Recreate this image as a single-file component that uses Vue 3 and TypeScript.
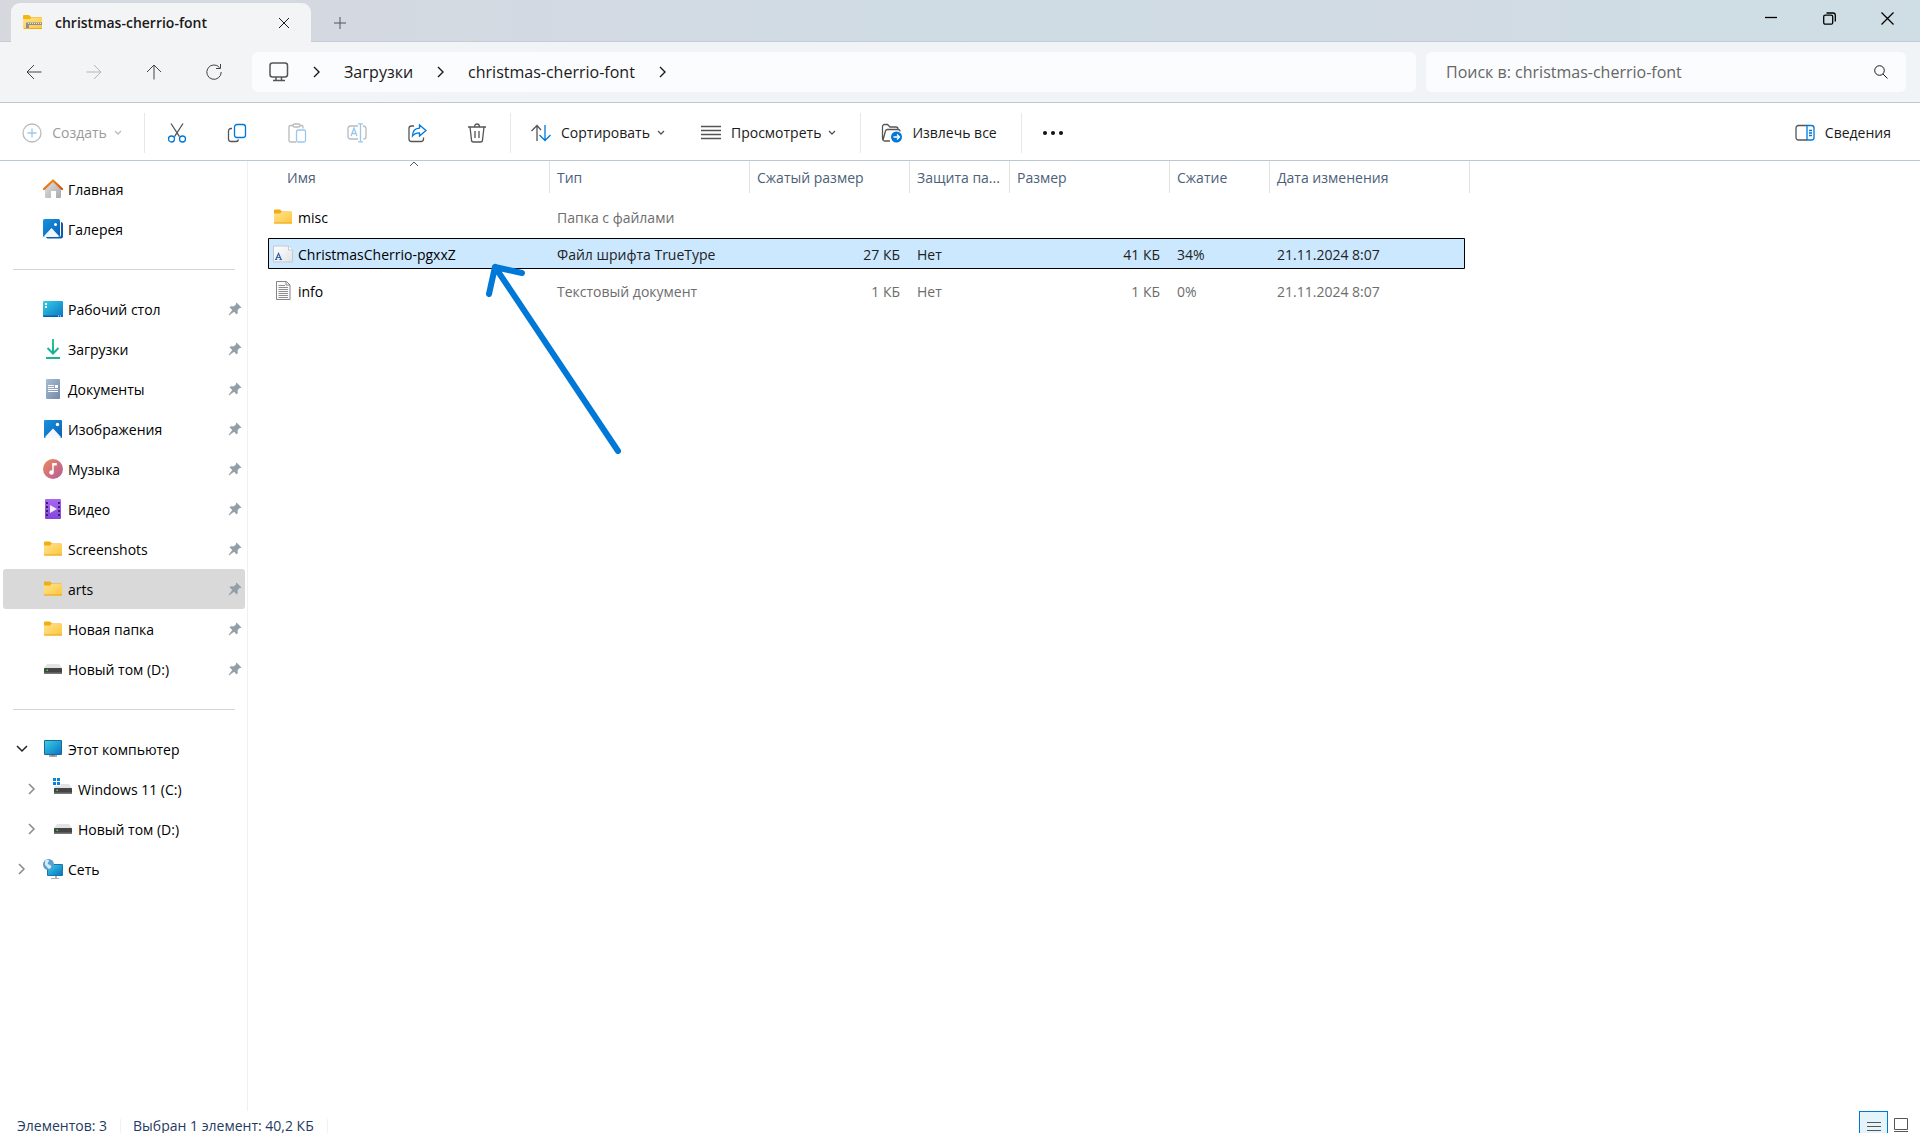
<script setup lang="ts">
import { ref } from 'vue'

interface Place {
  label: string
  icon: string
  pinned?: boolean
  child?: boolean
  twisty?: 'open' | 'closed'
}

interface FileRow {
  name: string
  icon: string
  type: string
  packed: string
  locked: string
  size: string
  ratio: string
  date: string
}

const glyphs: Record<string, string> = {
  home: '<path d="M2 9 10 2l8 7v9a1 1 0 0 1-1 1h-4v-7H8v7H3a1 1 0 0 1-1-1z" fill="url(#g-grey)"/><path d="M1 10 10 1.500l9 8.500" fill="none" stroke="url(#g-roof)" stroke-width="2.200" stroke-linejoin="round" stroke-linecap="round"/>',
  gallery: '<path d="M18 3v13a2 2 0 0 1-2 2H3c.5 1.300 1.200 1.500 2 1.500h13c1.200 0 2-.8 2-2V5c0-1-.8-1.800-2-2z" fill="#0d5cab"/><rect width="17" height="18" rx="1.500" fill="url(#g-blue)"/><path d="m1 17 7.500-8 7.500 8c-.3.600-.6 1-1.500 1h-12C1.600 18 1.200 17.600 1 17z" fill="#eef6ff"/><circle cx="12.500" cy="5.500" r="1.500" fill="#fff"/>',
  desktop: '<rect y="2" width="20" height="16" rx="1" fill="url(#g-cyan)"/><path d="M0 16.500h20v.5a1 1 0 0 1-1 1H1a1 1 0 0 1-1-1z" fill="#0b61a8"/><path d="M2 4h2v2H2zM2 7h2v2H2z" fill="#fff"/><path d="M15 16.500h1v1h-1zM17 16.500h1v1h-1z" fill="#fff"/>',
  downloads: '<path d="M10 0v14.500M4.500 9 10 14.500 15.500 9" fill="none" stroke="url(#g-green)" stroke-width="2"/><path d="M3 19h14" stroke="#17b794" stroke-width="2"/>',
  documents: '<rect x="3" width="14" height="20" rx="1" fill="url(#g-doc)"/><path d="M5 6.500h6M5 8.500h6M5 10.500h10M5 12.500h10" stroke="#fff"/><path d="M12 6h3v3h-3z" fill="#fff"/>',
  pictures: '<rect x="1" y="1" width="18" height="18" rx="1" fill="url(#g-blue)"/><path d="m2 18 8-8.500 8 8.500c-.3.600-.6 1-1.200 1H3.200c-.6 0-1-.4-1.200-1z" fill="#f3f8ff"/><circle cx="14.500" cy="5.500" r="1.700" fill="#fff"/>',
  music: '<circle cx="10" cy="10" r="10" fill="url(#g-music)"/><path d="M10 4.500v8.500" stroke="#fff" stroke-width="1.500"/><path d="M9.300 4h4.500v2.500H9.300z" fill="#fff"/><circle cx="8.500" cy="13.500" r="2.300" fill="#fff"/>',
  video: '<rect x="2" width="16" height="20" rx="1" fill="url(#g-violet)"/><path d="M4 3v15M16 3v15" stroke="#3c1e6e" stroke-width="2" stroke-dasharray="2 2"/><path d="M7 6v8l7-4z" fill="#f4ecff"/>',
  folder: '<path d="M1 3.500a1 1 0 0 1 1-1h5L9 4.500h9a1 1 0 0 1 1 1V8H1z" fill="#f3ac12"/><path d="M1 6.500h6l1.500-1.500H19v10.500a1 1 0 0 1-1 1H2a1 1 0 0 1-1-1z" fill="url(#g-folder)"/><path d="M1 16h18" stroke="#e7a51b"/>',
  drive: '<path d="M4 5h12l3 4H1z" fill="#e3e3e5"/><rect x="1" y="9" width="18" height="6" rx=".5" fill="#444"/><path d="M1 13.500h18V15H1z" fill="#777"/><path d="M3.500 10.500h1.500V12H3.500z" fill="#2dea4a"/>',
  system: '<path d="M4 5h12l3 4H1z" fill="#e3e3e5"/><rect x="1" y="9" width="18" height="6" rx=".5" fill="#444"/><path d="M1 13.500h18V15H1z" fill="#777"/><path d="M3.500 10.500h1.500V12H3.500z" fill="#2dea4a"/><path d="M0-1h7.500v8H0z" fill="#fff"/><path d="M0-1h3v3H0zM4-1h3v3H4zM0 3h3v3H0zM4 3h3v3H4z" fill="#0a84d8"/>',
  computer: '<path d="M8.500 15h3v2h-3z" fill="#9aa1a8"/><path d="M6 17h8" stroke="#6a7178" stroke-width="1.200"/><rect x="1" y="1" width="18" height="15" rx="1" fill="#1d6796"/><rect x="2" y="2" width="16" height="13" fill="url(#g-cyan)"/>',
  network: '<path d="M12 16h2v3h-2zM8 19h8v1H8z" fill="#a8afb6"/><rect x="4" y="5" width="16" height="12" rx="1" fill="#1c74a8"/><rect x="5" y="6" width="14" height="10" fill="url(#g-cyan)"/><circle cx="5.500" cy="5.500" r="5.500" fill="#5b9fd0"/><path d="M2 2c2-2 4-1 4 0s-2 2-1 3 2 0 3 2-2 3-2 3C4 9 4 7 2 6z" fill="#d5eaf7"/>',
  font: '<path d="M.5 2h15L19.500 6v12H.5z" fill="url(#g-page)" stroke="#c3c8cd"/><path d="M15.500 2v4h4" fill="#fff" stroke="#c3c8cd"/><path d="m3 15 2.500-5.500L8 15M4 13.500h3M2 15.500h2.200M6.500 15.500H9" fill="none" stroke="#2e62ae" stroke-width="1.200"/>',
  text: '<path d="M3.500.5h10L17 4v14.500H3.500z" fill="#fafafa" stroke="#858585"/><path d="M13 .5V4h4" fill="none" stroke="#858585"/><path d="M5.500 4.500H12M5.500 6.500H15M5.500 8.500H15M5.500 10.500H15M5.500 12.500H15M5.500 14.500H15M5.500 16.500H15" stroke="#8f8f8f"/>',
  zip: '<path d="M0 3a1 1 0 0 1 1-1h5l2 2h10a1 1 0 0 1 1 1v3H0z" fill="#f5b70f"/><path d="M0 6h7l1.500-1.500H19V15a1 1 0 0 1-1 1H1a1 1 0 0 1-1-1z" fill="url(#g-folder)"/><path d="M4 9.500h15v2.500H6v4H3v-6z" fill="#8b8f94"/><path d="M5 10.500h14" stroke="#e4e6e8" stroke-dasharray="1 1"/><path d="M1 15.500h18" stroke="#eaaa20"/>',
}

const groups: Place[][] = [
  [
    { label: 'Главная', icon: 'home' },
    { label: 'Галерея', icon: 'gallery' },
  ],
  [
    { label: 'Рабочий стол', icon: 'desktop', pinned: true },
    { label: 'Загрузки', icon: 'downloads', pinned: true },
    { label: 'Документы', icon: 'documents', pinned: true },
    { label: 'Изображения', icon: 'pictures', pinned: true },
    { label: 'Музыка', icon: 'music', pinned: true },
    { label: 'Видео', icon: 'video', pinned: true },
    { label: 'Screenshots', icon: 'folder', pinned: true },
    { label: 'arts', icon: 'folder', pinned: true },
    { label: 'Новая папка', icon: 'folder', pinned: true },
    { label: 'Новый том (D:)', icon: 'drive', pinned: true },
  ],
  [
    { label: 'Этот компьютер', icon: 'computer', twisty: 'open' },
    { label: 'Windows 11 (C:)', icon: 'system', twisty: 'closed', child: true },
    { label: 'Новый том (D:)', icon: 'drive', twisty: 'closed', child: true },
    { label: 'Сеть', icon: 'network', twisty: 'closed' },
  ],
]

const columns = ['Имя', 'Тип', 'Сжатый размер', 'Защита па...', 'Размер', 'Сжатие', 'Дата изменения']

const files: FileRow[] = [
  { name: 'misc', icon: 'folder', type: 'Папка с файлами', packed: '', locked: '', size: '', ratio: '', date: '' },
  { name: 'ChristmasCherrio-pgxxZ', icon: 'font', type: 'Файл шрифта TrueType', packed: '27 КБ', locked: 'Нет', size: '41 КБ', ratio: '34%', date: '21.11.2024 8:07' },
  { name: 'info', icon: 'text', type: 'Текстовый документ', packed: '1 КБ', locked: 'Нет', size: '1 КБ', ratio: '0%', date: '21.11.2024 8:07' },
]

const currentPlace = ref('arts')
const selectedFile = ref('ChristmasCherrio-pgxxZ')
const query = ref('')
</script>

<template>
  <div class="explorer">
    <svg class="defs" width="0" height="0" aria-hidden="true">
      <defs>
        <linearGradient id="g-grey" x2="1" y2="1"><stop stop-color="#e2e2e2" /><stop offset="1" stop-color="#a9a9a9" /></linearGradient>
        <linearGradient id="g-roof" x2="1" y2="1"><stop stop-color="#f59a1b" /><stop offset="1" stop-color="#d8480c" /></linearGradient>
        <linearGradient id="g-blue" x2="1" y2="1"><stop stop-color="#1793e0" /><stop offset="1" stop-color="#0a5fb4" /></linearGradient>
        <linearGradient id="g-cyan" x2="1" y2="1"><stop stop-color="#35d0e2" /><stop offset="1" stop-color="#0b73c8" /></linearGradient>
        <linearGradient id="g-green" gradientUnits="userSpaceOnUse" x1="0" y1="0" x2="0" y2="18"><stop stop-color="#2fc98c" /><stop offset="1" stop-color="#12a69a" /></linearGradient>
        <linearGradient id="g-doc" x2="1" y2="1"><stop stop-color="#a9bdd3" /><stop offset="1" stop-color="#7288a6" /></linearGradient>
        <linearGradient id="g-music" x2="1" y2="1"><stop stop-color="#ee8a55" /><stop offset="1" stop-color="#b25aa0" /></linearGradient>
        <linearGradient id="g-violet" x2="0" y2="1"><stop stop-color="#a967f2" /><stop offset="1" stop-color="#8544dc" /></linearGradient>
        <linearGradient id="g-folder" x2="1" y2="1"><stop stop-color="#ffe391" /><stop offset="1" stop-color="#fdc638" /></linearGradient>
        <linearGradient id="g-page" x2="1" y2="1"><stop stop-color="#fff" /><stop offset="1" stop-color="#dfe3e8" /></linearGradient>
      </defs>
    </svg>

    <header class="titlebar">
      <div class="tab">
        <svg class="ico" viewBox="0 0 20 20" v-html="glyphs.zip" />
        <span class="tab-title">christmas-cherrio-font</span>
        <button class="tab-close" aria-label="Закрыть вкладку">
          <svg width="12" height="12" viewBox="0 0 12 12"><path d="m1 1 10 10M11 1 1 11" /></svg>
        </button>
      </div>
      <button class="tab-add" aria-label="Новая вкладка">
        <svg width="12" height="12" viewBox="0 0 12 12"><path d="M6 0v12M0 6h12" /></svg>
      </button>
      <div class="caption">
        <button aria-label="Свернуть"><svg width="12" height="12" viewBox="0 0 12 12"><path d="M0 5.500h12" /></svg></button>
        <button aria-label="Восстановить">
          <svg width="13" height="13" viewBox="0 0 13 13"><rect x=".7" y="3.200" width="9" height="9" rx="1.500" /><path d="M3.500 1h6.500a2.300 2.300 0 0 1 2.300 2.300V9.500" /></svg>
        </button>
        <button aria-label="Закрыть"><svg width="13" height="13" viewBox="0 0 13 13"><path d="m.5.5 12 12M12.500.5l-12 12" /></svg></button>
      </div>
    </header>

    <div class="navbar">
      <div class="history">
        <button aria-label="Назад"><svg width="16" height="16" viewBox="0 0 16 16"><path d="M15.500 8H1M8 1 1 8l7 7" /></svg></button>
        <button aria-label="Вперёд" disabled><svg width="16" height="16" viewBox="0 0 16 16"><path d="M.5 8H15M8 1l7 7-7 7" /></svg></button>
        <button aria-label="Вверх"><svg width="16" height="16" viewBox="0 0 16 16"><path d="M8 15.500V1M1 8l7-7 7 7" /></svg></button>
        <button aria-label="Обновить"><svg width="16" height="16" viewBox="0 0 16 16"><path d="M13.500 3.500A7.200 7.200 0 1 0 15.200 8M14.500 0v4.500H10" /></svg></button>
      </div>
      <nav class="address" aria-label="Адрес">
        <svg class="pc" width="20" height="20" viewBox="0 0 20 20"><rect x="1" y="1" width="17.500" height="14" rx="2.500" /><path d="M7 15v3M12.500 15v3M4 18.500h12" /></svg>
        <svg class="crumb-sep" viewBox="0 0 7 12"><path d="m1 1 5 5-5 5" /></svg>
        <a href="#">Загрузки</a>
        <svg class="crumb-sep" viewBox="0 0 7 12"><path d="m1 1 5 5-5 5" /></svg>
        <a href="#">christmas-cherrio-font</a>
        <svg class="crumb-sep" viewBox="0 0 7 12"><path d="m1 1 5 5-5 5" /></svg>
      </nav>
      <label class="search">
        <input v-model="query" type="text" placeholder="Поиск в: christmas-cherrio-font" aria-label="Поиск" />
        <svg width="14" height="14" viewBox="0 0 14 14"><circle cx="5.500" cy="5.500" r="4.800" /><path d="m9 9 4.500 4.500" /></svg>
      </label>
    </div>

    <div class="toolbar">
      <button class="cmd create" disabled>
        <svg width="20" height="20" viewBox="0 0 20 20"><circle cx="10" cy="10" r="9" /><path class="blue" d="M10 5.500v9M5.500 10h9" /></svg>
        <span>Создать</span>
        <svg class="chev" viewBox="0 0 8 5"><path d="m1 1 3 3 3-3" /></svg>
      </button>
      <i class="rule" />
      <div class="icons">
        <button aria-label="Вырезать"><svg width="20" height="20" viewBox="0 0 20 20"><path d="m4 .5 8.500 13.200M16 .5 7.500 13.700" /><g class="blue"><circle cx="4.500" cy="16" r="3" /><circle cx="15.500" cy="16" r="3" /></g></svg></button>
        <button aria-label="Копировать"><svg width="20" height="20" viewBox="0 0 20 20"><path d="M5 5.500H4A2.500 2.500 0 0 0 1.500 8v8A2.500 2.500 0 0 0 4 18.500h5a2.500 2.500 0 0 0 2.500-2" /><rect class="blue" x="7.500" y="1.500" width="11" height="13" rx="2.500" /></svg></button>
        <button aria-label="Вставить" disabled><svg width="20" height="20" viewBox="0 0 20 20"><path d="M6 2.500H3.500A1.500 1.500 0 0 0 2 4v13.500A1.500 1.500 0 0 0 3.500 19H9M13 2.500h1.500A1.500 1.500 0 0 1 16 4v1.500" /><rect x="6" y="1" width="7" height="3" rx="1.500" /><rect class="blue" x="9.500" y="7" width="9" height="12" rx="1.500" /></svg></button>
        <button aria-label="Переименовать" disabled><svg width="20" height="20" viewBox="0 0 20 20"><path d="M11 3H3.500A2.500 2.500 0 0 0 1 5.500v8A2.500 2.500 0 0 0 3.500 16H11M16 3a3 3 0 0 1 3 2.500v8A2.500 2.500 0 0 1 16.500 16" /><path class="blue" d="M13.500.8v18M11 .8h5M11 18.800h5M4 13l3-8 3 8M5 10.500h4" /></svg></button>
        <button aria-label="Поделиться"><svg width="20" height="20" viewBox="0 0 20 20"><path d="M7 3H4.500A2.500 2.500 0 0 0 2 5.500V16a2.500 2.500 0 0 0 2.500 2.500H14a2.500 2.500 0 0 0 2.500-2.500v-1.500" /><path class="blue" d="M12.500 2 19 7.500 12.500 13v-3.200c-3.500 0-5.500 1-7 3.200 0-4.500 2.500-7.500 7-7.800z" /></svg></button>
        <button aria-label="Удалить"><svg width="20" height="20" viewBox="0 0 20 20"><path d="M1 4h18M3 4l1.500 13A2 2 0 0 0 6.500 19h7a2 2 0 0 0 2-2L17 4M7.500 4c0-4 5-4 5 0M8 8v7M12 8v7" /></svg></button>
      </div>
      <i class="rule" />
      <button class="cmd">
        <svg width="20" height="20" viewBox="0 0 20 20"><path d="M6 18V2.500M.5 8 6 2.500 10 7" /><path class="blue" d="M14 2v15.500M8.500 12l5.500 5.500 5.500-5.500" /></svg>
        <span>Сортировать</span>
        <svg class="chev" viewBox="0 0 8 5"><path d="m1 1 3 3 3-3" /></svg>
      </button>
      <button class="cmd view">
        <svg width="20" height="20" viewBox="0 0 20 20"><path d="M0 3.500h20M0 7.500h20M0 11.500h20M0 15.500h20" /></svg>
        <span>Просмотреть</span>
        <svg class="chev" viewBox="0 0 8 5"><path d="m1 1 3 3 3-3" /></svg>
      </button>
      <i class="rule" />
      <button class="cmd extract">
        <svg width="21" height="20" viewBox="0 0 21 20"><path d="M9 18H4a2.500 2.500 0 0 1-2.500-2.500V3.500A2 2 0 0 1 3.500 1.500h3l2.500 2.500h6a2 2 0 0 1 2 2M2 17 4.500 8a2 2 0 0 1 2-1.500H17a2 2 0 0 1 2 2" /><circle cx="15.500" cy="14" r="5.500" fill="#0078d7" stroke="none" /><path d="M12.500 14h6M16 11.500l2.500 2.500-2.500 2.500" stroke="#fff" /></svg>
        <span>Извлечь все</span>
      </button>
      <i class="rule" />
      <button class="more" aria-label="Дополнительно"><svg width="20" height="4" viewBox="0 0 20 4"><circle cx="2" cy="2" r="2" /><circle cx="10" cy="2" r="2" /><circle cx="18" cy="2" r="2" /></svg></button>
      <button class="cmd details">
        <svg width="20" height="20" viewBox="0 0 20 20"><path d="M12 2.500H3.500A2.500 2.500 0 0 0 1 5v9.500A2.500 2.500 0 0 0 3.500 17H12" /><path class="blue" d="M12 2.500h4.500A2.500 2.500 0 0 1 19 5v9.500a2.500 2.500 0 0 1-2.500 2.500H12zM14 7.500h3M14 10h3M14 12.500h3" /></svg>
        <span>Сведения</span>
      </button>
    </div>

    <div class="body">
      <nav class="sidebar" aria-label="Область навигации">
        <ul v-for="(group, g) in groups" :key="g">
          <li v-for="place in group" :key="place.label">
            <a
              href="#"
              :class="{ child: place.child, current: place.label === currentPlace }"
              @click.prevent="currentPlace = place.label"
            >
              <span class="twisty">
                <svg v-if="place.twisty === 'open'" class="open" width="12" height="8" viewBox="0 0 12 8"><path d="m1 1 5 5 5-5" /></svg>
                <svg v-else-if="place.twisty" width="8" height="12" viewBox="0 0 8 12"><path d="m1 1 5 5-5 5" /></svg>
              </span>
              <svg class="ico" viewBox="0 0 20 20" v-html="glyphs[place.icon]" />
              <span class="label">{{ place.label }}</span>
              <svg v-if="place.pinned" class="pin" width="14" height="14" viewBox="0 0 14 14"><path d="M8.500.5 13.500 5.500c-1 .8-2 .5-2 .5L9.500 8.500c.5 2 .2 3-.7 4L6 9.700 1 13.500l-.5-.5L4.300 8 1.500 5.200c1-1 2-1.200 4-.7L8 2.500s-.3-1 .5-2z" /></svg>
            </a>
          </li>
        </ul>
      </nav>

      <main class="content">
        <table>
          <thead>
            <tr>
              <th v-for="(column, c) in columns" :key="column" scope="col">
                {{ column }}
                <svg v-if="c === 0" class="sorted" width="10" height="6" viewBox="0 0 10 6"><path d="m1 5 4-4 4 4" /></svg>
              </th>
            </tr>
          </thead>
          <tbody>
            <tr
              v-for="file in files"
              :key="file.name"
              :class="{ selected: file.name === selectedFile }"
              @click="selectedFile = file.name"
            >
              <td class="name"><svg class="ico" viewBox="0 0 20 20" v-html="glyphs[file.icon]" /><span>{{ file.name }}</span></td>
              <td>{{ file.type }}</td>
              <td class="num">{{ file.packed }}</td>
              <td>{{ file.locked }}</td>
              <td class="num">{{ file.size }}</td>
              <td>{{ file.ratio }}</td>
              <td>{{ file.date }}</td>
            </tr>
          </tbody>
        </table>
        <svg class="pointer" width="140" height="196" viewBox="0 0 140 196" aria-hidden="true"><path d="M134 190 11 6M5 33l6-27 27 6" /></svg>
      </main>
    </div>

    <footer class="status">
      <span>Элементов: 3</span>
      <span>Выбран 1 элемент: 40,2 КБ</span>
      <div class="modes">
        <button class="on" aria-label="Таблица"><svg width="14" height="14" viewBox="0 0 14 14"><path d="M0 .5h14M0 4.500h14M0 8.500h14M0 12.500h14" /></svg></button>
        <button aria-label="Крупные значки"><svg width="14" height="16" viewBox="0 0 14 16"><path d="M.5.5h13v11H.5zM0 13.500h14" /></svg></button>
      </div>
    </footer>
  </div>
</template>

<style>
body {
  margin: 0;
}
</style>

<style scoped>
.explorer {
  display: flex;
  flex-direction: column;
  height: 100vh;
  overflow: hidden;
  background: #fff;
  color: #1a1a1a;
  font-family: "Open Sans", "Noto Sans", sans-serif;
  font-size: 14px;
  line-height: 20px;
}
.defs {
  position: absolute;
}
button {
  display: flex;
  align-items: center;
  justify-content: center;
  padding: 0;
  border: 0;
  background: none;
  color: inherit;
  font: inherit;
}
a {
  color: inherit;
  text-decoration: none;
}
svg {
  flex: none;
  fill: none;
  stroke: currentColor;
}
svg.ico {
  width: 20px;
  height: 20px;
  overflow: visible;
  stroke: none;
}

.titlebar {
  display: flex;
  flex: none;
  box-sizing: border-box;
  height: 42px;
  padding-left: 11px;
  border-bottom: 1px solid #c3ccd5;
  background: linear-gradient(90deg, #d5d9de, #d3d9e2 28%, #cfdce4 50%, #d2dbe3 75%, #cfdde4 88%);
}
.tab {
  display: flex;
  align-items: center;
  box-sizing: border-box;
  width: 300px;
  height: 39px;
  margin-top: 3px;
  padding: 0 15px 0 12px;
  border-radius: 9px 9px 0 0;
  background: #f3f4f6;
}
.tab-title {
  flex: 1;
  margin-left: 12px;
  font-weight: 600;
}
.tab-close {
  width: 24px;
  height: 24px;
}
.tab-add {
  width: 58px;
  padding-top: 4px;
  color: #555;
}
.caption {
  display: flex;
  align-items: flex-start;
  margin-left: auto;
  padding-right: 4px;
  color: #000;
}
.caption button {
  width: 58px;
  height: 36px;
}
.caption svg {
  stroke-width: 1.3;
}

.navbar {
  display: flex;
  flex: none;
  align-items: center;
  gap: 8px;
  box-sizing: border-box;
  height: 61px;
  padding: 0 14px 0 4px;
  border-bottom: 1px solid #bcc8d2;
  background: linear-gradient(90deg, #f3f4f6, #f0f4f7 45%);
  font-size: 16px;
  line-height: 24px;
}
.history {
  display: flex;
  flex: none;
  color: #444;
}
.history button {
  width: 60px;
  height: 40px;
}
.history button:disabled {
  color: #b5b5b5;
}
.address {
  display: flex;
  flex: 1;
  align-items: center;
  height: 40px;
  margin-right: 2px;
  padding-left: 17px;
  border-radius: 6px;
  background: #fbfcfe;
}
.pc {
  stroke: #555;
  stroke-width: 1.5;
}
.crumb-sep {
  width: 7px;
  height: 12px;
  margin: 0 24px;
  stroke-width: 1.4;
}
.search {
  display: flex;
  flex: none;
  align-items: center;
  box-sizing: border-box;
  width: 25vw;
  height: 40px;
  padding: 0 18px 0 20px;
  border-radius: 6px;
  background: #fbfcfe;
}
.search input {
  flex: 1;
  min-width: 0;
  padding: 0;
  border: 0;
  outline: 0;
  background: none;
  font: inherit;
}
.search input::placeholder {
  color: #666;
  opacity: 1;
}

.toolbar {
  display: flex;
  flex: none;
  align-items: center;
  box-sizing: border-box;
  height: 58px;
  padding-top: 2px;
  border-bottom: 1px solid #bcc8d2;
}
.toolbar svg {
  color: #555;
  stroke-width: 1.3;
}
.toolbar .blue {
  stroke: #0078d7;
}
.toolbar button:disabled {
  color: #9b9b9b;
}
.toolbar button:disabled svg {
  opacity: 0.4;
}
.rule {
  width: 1px;
  height: 40px;
  background: #e8e8e8;
}
.cmd {
  gap: 10px;
  height: 40px;
  padding: 0 20px;
}
.cmd .chev {
  width: 8px;
  height: 5px;
  margin-left: -3px;
}
.create {
  box-sizing: border-box;
  width: 144px;
}
.icons {
  display: flex;
  padding: 0 3px 0 2px;
}
.icons button {
  width: 60px;
  height: 40px;
}
.view {
  padding: 0 24px 0 16px;
}
.extract {
  padding-right: 24px;
}
.more {
  width: 62px;
  height: 40px;
}
.toolbar .more svg {
  fill: #111;
  stroke: none;
}
.details {
  margin-left: auto;
  padding-right: 29px;
}

.body {
  display: flex;
  flex: 1;
  min-height: 0;
}
.sidebar {
  box-sizing: border-box;
  width: 248px;
  padding: 8px 2px 0 3px;
  border-right: 1px solid #f0f0f0;
  color: #000;
}
ul {
  margin: 0;
  padding: 0;
  list-style: none;
}
ul + ul::before {
  content: "";
  display: block;
  height: 1px;
  margin: 20px 10px 19px;
  background: #d4d4d4;
}
.sidebar a {
  display: flex;
  align-items: center;
  gap: 5px;
  height: 40px;
  padding: 0 3px 0 2px;
  border-radius: 3px;
}
.sidebar a.current {
  background: #d9d9d9;
}
.sidebar a.child {
  padding-left: 12px;
}
.twisty {
  display: flex;
  justify-content: center;
  width: 33px;
  color: #8a8a8a;
}
.twisty svg {
  stroke-width: 1.5;
}
.twisty .open {
  color: #222;
}
.label {
  flex: 1;
  padding-top: 2px;
}
.pin {
  fill: #939fa8;
  stroke: none;
}

.content {
  position: relative;
  flex: 1;
  min-width: 0;
  padding-left: 20px;
}
table,
thead,
tbody {
  display: block;
}
tr {
  display: grid;
  grid-template-columns: 282px 200px 160px 100px 160px 100px 195px;
}
thead tr {
  grid-template-columns: 282px 200px 160px 100px 160px 100px 200px;
  width: max-content;
}
tbody {
  padding-top: 8px;
}
tbody tr {
  align-items: center;
  box-sizing: border-box;
  width: max-content;
  height: 31px;
  margin-bottom: 6px;
  color: #6d6d6d;
}
th {
  position: relative;
  box-sizing: border-box;
  height: 32px;
  padding: 7px 7px 0;
  border-right: 1px solid #e2e2e2;
  color: #4c607a;
  font-weight: 400;
  text-align: left;
  white-space: nowrap;
}
th:first-child {
  padding-left: 19px;
}
.sorted {
  position: absolute;
  top: 0;
  left: 141px;
  color: #555;
}
td {
  padding: 2px 7px 0;
  white-space: nowrap;
}
.name {
  display: flex;
  align-items: center;
  gap: 5px;
  padding: 0 0 0 5px;
  color: #000;
}
.name span {
  padding-top: 2px;
}
.num {
  padding-right: 10px;
  text-align: right;
}
tr.selected {
  border-radius: 1px;
  background: #cce8ff;
  color: #222;
  box-shadow: inset 0 0 0 1px #000;
}
.pointer {
  position: absolute;
  top: 100px;
  left: 236px;
  stroke: #0078d7;
  stroke-width: 6;
  stroke-linecap: round;
  stroke-linejoin: round;
  pointer-events: none;
}

.status {
  display: flex;
  flex: none;
  height: 22px;
  padding: 0 12px 0 17px;
  overflow: hidden;
  color: #1f3b63;
  line-height: 14px;
}
.status span {
  height: 14px;
  margin-top: 8px;
  padding-right: 13px;
  border-right: 1px solid #f2f2f2;
}
.status span + span {
  padding-left: 12px;
}
.modes {
  display: flex;
  align-items: flex-start;
  gap: 6px;
  margin-left: auto;
  color: #555;
}
.modes button {
  padding-top: 7px;
}
.modes .on {
  box-sizing: border-box;
  width: 29px;
  height: 29px;
  border: 1px solid #0078d7;
  background: #e5f3fb;
}
</style>
